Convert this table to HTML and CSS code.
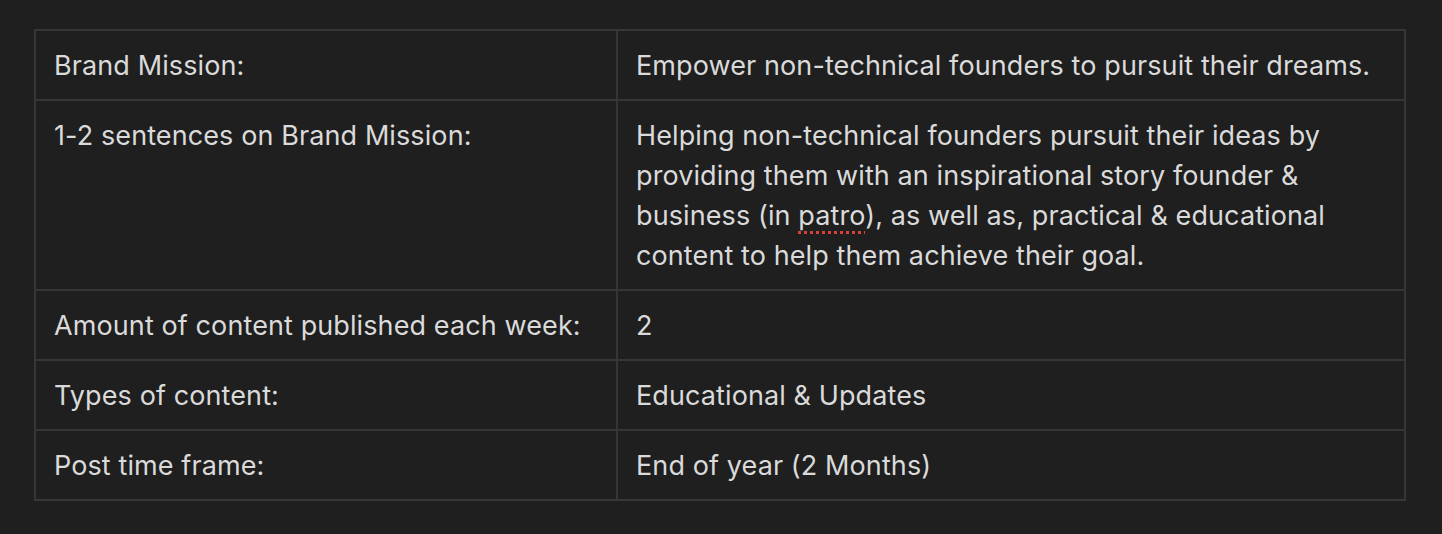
FILE: index.html
```html
<!DOCTYPE html>
<html lang="en">
<head>
<meta charset="utf-8">
<title>Brand Mission</title>
<link rel="stylesheet" href="styles.css">
</head>
<body>
<main class="page">
  <table class="info-table">
    <colgroup>
      <col class="col-label">
      <col class="col-value">
    </colgroup>
    <tbody>
      <tr>
        <td>Brand Mission:</td>
        <td>Empower non-technical founders to pursuit their dreams.</td>
      </tr>
      <tr>
        <td>1-2 sentences on Brand Mission:</td>
        <td>Helping non-technical founders pursuit their ideas by providing them with an inspirational story founder &amp; business (in <span class="misspelled">patro</span>), as well as, practical &amp; educational content to help them achieve their goal.</td>
      </tr>
      <tr>
        <td>Amount of content published each week:</td>
        <td>2</td>
      </tr>
      <tr>
        <td>Types of content:</td>
        <td>Educational &amp; Updates</td>
      </tr>
      <tr>
        <td>Post time frame:</td>
        <td>End of year (2 Months)</td>
      </tr>
    </tbody>
  </table>
</main>
</body>
</html>
```

FILE: styles.css
```css
html, body {
  margin: 0;
  padding: 0;
  background: #1f1f1f;
}

.page {
  padding: 29px 36px 0 34px;
}

.info-table {
  width: 1372px;
  border-collapse: collapse;
  table-layout: fixed;
  font-family: Inter, "Noto Sans", sans-serif;
  font-size: 27px;
  letter-spacing: 0.1px;
  line-height: 40px;
  color: #dadada;
}

.col-label {
  width: 582px;
}

.info-table td {
  border: 2px solid #363636;
  padding: 15px 19px 13px 18px;
  vertical-align: top;
  text-align: left;
}

.misspelled {
  text-decoration-line: underline;
  text-decoration-style: dotted;
  text-decoration-color: #d8413a;
  text-decoration-thickness: 3px;
  text-underline-offset: 6px;
}
```
